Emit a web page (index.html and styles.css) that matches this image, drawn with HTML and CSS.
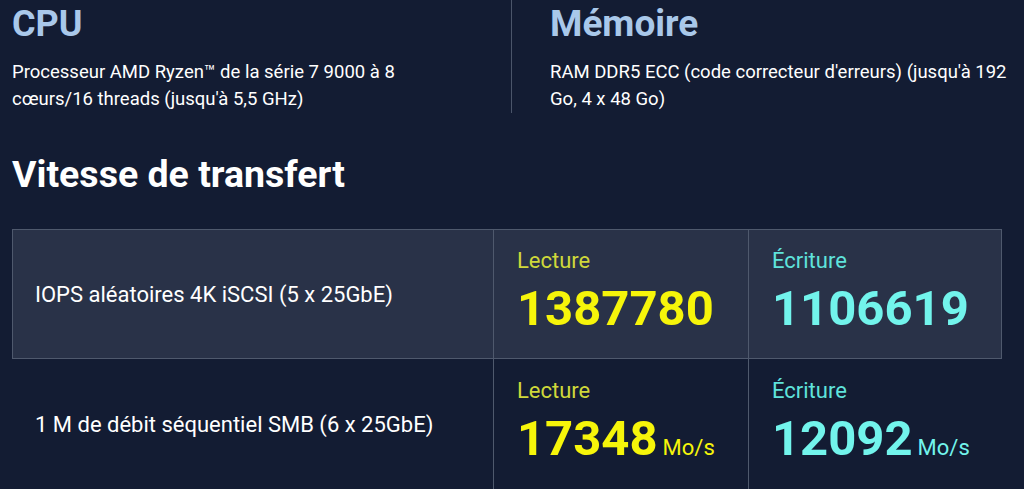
FILE: index.html
```html
<!DOCTYPE html>
<html lang="fr">
<head>
<meta charset="utf-8">
<link rel="stylesheet" href="styles.css">
</head>
<body>
<div class="page">
  <div class="specs">
    <div class="spec spec-first">
      <h2 class="spec-title">CPU</h2>
      <p class="spec-text">Processeur AMD Ryzen™ de la série 7 9000 à 8 cœurs/16 threads (jusqu'à 5,5 GHz)</p>
    </div>
    <div class="spec spec-second">
      <h2 class="spec-title">Mémoire</h2>
      <p class="spec-text">RAM DDR5 ECC (code correcteur d'erreurs) (jusqu'à 192 Go, 4 x 48 Go)</p>
    </div>
  </div>
  <h1 class="section-title">Vitesse de transfert</h1>
  <div class="perf">
    <div class="row row-hl">
      <div class="cell label">IOPS aléatoires 4K iSCSI (5 x 25GbE)</div>
      <div class="cell metric read">
        <div class="metric-label">Lecture</div>
        <div class="metric-value">1387780</div>
      </div>
      <div class="cell metric write">
        <div class="metric-label">Écriture</div>
        <div class="metric-value">1106619</div>
      </div>
    </div>
    <div class="row row-plain">
      <div class="cell label">1 M de débit séquentiel SMB (6 x 25GbE)</div>
      <div class="cell metric read">
        <div class="metric-label">Lecture</div>
        <div class="metric-value">17348<span class="unit">Mo/s</span></div>
      </div>
      <div class="cell metric write">
        <div class="metric-label">Écriture</div>
        <div class="metric-value">12092<span class="unit">Mo/s</span></div>
      </div>
    </div>
  </div>
</div>
</body>
</html>
```

FILE: styles.css
```css
html, body {
  margin: 0;
  padding: 0;
  background: #131c33;
  overflow: hidden;
}
body {
  font-family: Roboto, "Liberation Sans", sans-serif;
  color: #ffffff;
}
.page {
  width: 1024px;
  height: 489px;
  padding: 0 0 0 12px;
  box-sizing: border-box;
}
.specs {
  display: flex;
}
.spec {
  width: 500px;
  box-sizing: border-box;
  height: 113px;
}
.spec-first {
  border-right: 1px solid #4b556a;
}
.spec-second {
  padding-left: 38px;
}
.spec-title {
  margin: 0;
  padding-top: 4px;
  font-size: 36px;
  line-height: 40px;
  font-weight: 700;
  color: #a9c8ea;
}
.spec-second .spec-title {
  font-size: 37px;
}
.spec-text {
  margin: 15px 0 0;
  font-size: 18.5px;
  line-height: 27px;
  color: #ffffff;
  max-width: 462px;
}
.section-title {
  margin: 39px 0 0;
  font-size: 37.5px;
  line-height: 44px;
  font-weight: 700;
  color: #ffffff;
}
.perf {
  margin-top: 33px;
  width: 990px;
}
.row {
  display: grid;
  grid-template-columns: 481px 255px 254px;
  height: 130px;
}
.row-hl {
  background: #293248;
  box-shadow: inset 0 0 0 1px #4f596d;
}
.cell {
  display: flex;
  flex-direction: column;
  justify-content: center;
}
.label {
  padding-left: 23px;
  font-size: 22px;
  color: #ffffff;
}
.metric {
  border-left: 1px solid #4f596d;
  padding-left: 23px;
  padding-bottom: 6px;
}
.row-plain .metric {
  padding-bottom: 0;
  padding-top: 2px;
}
.metric-label {
  font-size: 22px;
  line-height: 26px;
}
.metric-value {
  font-size: 49px;
  line-height: 50px;
  font-weight: 700;
  margin-top: 10px;
}
.unit {
  font-size: 22px;
  font-weight: 400;
  margin-left: 5px;
}
.read .metric-label { color: #cfd83a; }
.read .metric-value { color: #f6f50a; }
.write .metric-label { color: #5fe3dc; }
.write .metric-value { color: #72f4ec; }
```
